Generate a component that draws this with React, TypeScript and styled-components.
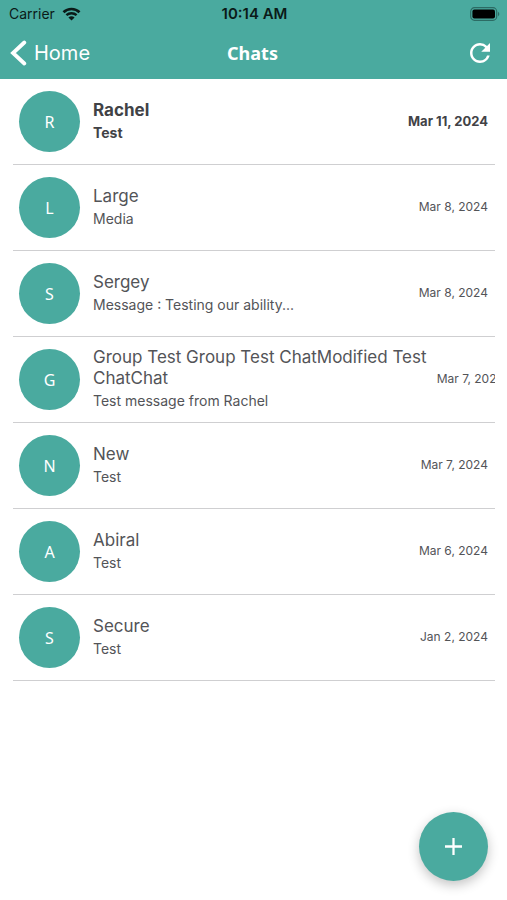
import React from "react";
import styled, { createGlobalStyle } from "styled-components";
import { MdRefresh } from "react-icons/md";

const TEAL = "#4aaa9f";

const GlobalStyle = createGlobalStyle`
  *, *::before, *::after { box-sizing: border-box; }
  body {
    margin: 0;
    background: #ffffff;
    font-family: Inter, "Liberation Sans", sans-serif;
    color: #4b4c50;
  }
`;

const Screen = styled.div`
  min-height: 100vh;
  display: flex;
  flex-direction: column;
`;

const TopArea = styled.header`
  background: ${TEAL};
`;

const StatusBar = styled.div`
  display: grid;
  grid-template-columns: 1fr auto 1fr;
  align-items: center;
  height: 27px;
  padding: 0 7px 0 9px;
  font-size: 14px;
  color: #0b1a18;
`;

const Carrier = styled.span`
  display: flex;
  align-items: center;
  gap: 7px;
`;

const Clock = styled.span`
  font-size: 15px;
  font-weight: 600;
`;

const BatteryIcon = styled.svg`
  justify-self: end;
`;

const NavBar = styled.nav`
  display: grid;
  grid-template-columns: 1fr auto 1fr;
  align-items: center;
  height: 52px;
  padding: 0 12px 0 10px;
  color: #ffffff;
`;

const BackButton = styled.button`
  display: flex;
  align-items: center;
  gap: 7px;
  justify-self: start;
  padding: 0;
  border: 0;
  background: none;
  color: inherit;
  font: 400 20px/24px Inter, "Liberation Sans", sans-serif;
`;

const Title = styled.h1`
  margin: 0;
  font: 700 18px/24px "Noto Sans", "Open Sans", sans-serif;
`;

const RefreshButton = styled.button`
  display: flex;
  justify-self: end;
  padding: 0;
  border: 0;
  background: none;
  color: inherit;
`;

const ChatList = styled.ul`
  list-style: none;
  margin: 0;
  padding: 0 12px 0 13px;
`;

const ChatRow = styled.li<{ $unread?: boolean }>`
  display: flex;
  align-items: center;
  min-height: 86px;
  padding: 0 7px 0 6px;
  border-bottom: 1px solid #cfcfd1;
  overflow: hidden;
  font-weight: ${(p) => (p.$unread ? 700 : 400)};
  color: ${(p) => (p.$unread ? "#414246" : "#535458")};
`;

const Avatar = styled.span`
  flex: none;
  display: grid;
  place-items: center;
  width: 61px;
  height: 61px;
  margin-right: 13px;
  border-radius: 50%;
  background: ${TEAL};
  color: #ffffff;
  font: 400 16px/20px "Noto Sans", "Open Sans", sans-serif;
`;

const Summary = styled.div`
  flex: none;
  max-width: 72%;
  padding-bottom: 1px;
`;

const Name = styled.div`
  font-size: 17px;
  line-height: 21px;
`;

const Preview = styled.div`
  padding-top: 1px;
  font-size: 14px;
  line-height: 21px;
`;

const DateLabel = styled.time<{ $unread?: boolean }>`
  flex: none;
  margin-left: auto;
  padding: 0 0 2px 6px;
  font-size: ${(p) => (p.$unread ? 13 : 12)}px;
  line-height: 16px;
  white-space: nowrap;
`;

const NewChatButton = styled.button`
  position: fixed;
  right: 19px;
  bottom: 19px;
  display: grid;
  place-items: center;
  width: 69px;
  height: 69px;
  padding: 0;
  border: 0;
  border-radius: 50%;
  background: ${TEAL};
  box-shadow: 0 4px 12px rgba(0, 0, 0, 0.24);
`;

type Chat = {
  name: string;
  preview: string;
  date: string;
  iso: string;
  unread?: boolean;
};

const chats: Chat[] = [
  { name: "Rachel", preview: "Test", date: "Mar 11, 2024", iso: "2024-03-11", unread: true },
  { name: "Large", preview: "Media", date: "Mar 8, 2024", iso: "2024-03-08" },
  { name: "Sergey", preview: "Message : Testing our ability...", date: "Mar 8, 2024", iso: "2024-03-08" },
  {
    name: "Group Test Group Test ChatModified Test ChatChat",
    preview: "Test message from Rachel",
    date: "Mar 7, 2024",
    iso: "2024-03-07",
  },
  { name: "New", preview: "Test", date: "Mar 7, 2024", iso: "2024-03-07" },
  { name: "Abiral", preview: "Test", date: "Mar 6, 2024", iso: "2024-03-06" },
  { name: "Secure", preview: "Test", date: "Jan 2, 2024", iso: "2024-01-02" },
];

function WifiIcon() {
  return (
    <svg width="19" height="14" viewBox="0 0 18 14" fill="none" stroke="#0b1a18" aria-hidden="true">
      <path d="M1 5.2C5.4 0.9 12.6 0.9 17 5.2" strokeWidth="2.7" />
      <path d="M3.9 8.2C6.8 5.5 11.2 5.5 14.1 8.2" strokeWidth="2.4" />
      <path d="M9 13.6L5.9 10.4C7.7 8.9 10.3 8.9 12.1 10.4Z" fill="#0b1a18" stroke="none" />
    </svg>
  );
}

export default function App() {
  return (
    <Screen>
      <GlobalStyle />
      <TopArea>
        <StatusBar>
          <Carrier>
            Carrier <WifiIcon />
          </Carrier>
          <Clock>10:14 AM</Clock>
          <BatteryIcon width="30" height="14" viewBox="0 0 30 14" aria-hidden="true">
            <rect x="0.7" y="0.7" width="26" height="12.6" rx="3.8" fill="none" stroke="#2c6b64" strokeWidth="1.2" />
            <rect x="2.4" y="2.4" width="22.6" height="9.2" rx="2" fill="#000000" />
            <path d="M28 4.8C29.8 5.5 29.8 8.5 28 9.2Z" fill="#2c6b64" />
          </BatteryIcon>
        </StatusBar>
        <NavBar>
          <BackButton type="button">
            <svg width="17" height="26" viewBox="0 0 17 26" fill="none" aria-hidden="true">
              <path d="M14.3 2.5L3 13L14.3 23.5" stroke="#ffffff" strokeWidth="3.8" strokeLinecap="round" />
            </svg>
            Home
          </BackButton>
          <Title>Chats</Title>
          <RefreshButton type="button" aria-label="Refresh">
            <MdRefresh size={30} />
          </RefreshButton>
        </NavBar>
      </TopArea>
      <main>
        <ChatList>
          {chats.map((chat) => (
            <ChatRow key={chat.name} $unread={chat.unread}>
              <Avatar aria-hidden="true">{chat.name[0]}</Avatar>
              <Summary>
                <Name>{chat.name}</Name>
                <Preview>{chat.preview}</Preview>
              </Summary>
              <DateLabel dateTime={chat.iso} $unread={chat.unread}>
                {chat.date}
              </DateLabel>
            </ChatRow>
          ))}
        </ChatList>
      </main>
      <NewChatButton type="button" aria-label="New chat">
        <svg width="17" height="17" viewBox="0 0 18 18" aria-hidden="true">
          <path d="M9 0V18M0 9H18" stroke="#ffffff" strokeWidth="2.4" />
        </svg>
      </NewChatButton>
    </Screen>
  );
}
